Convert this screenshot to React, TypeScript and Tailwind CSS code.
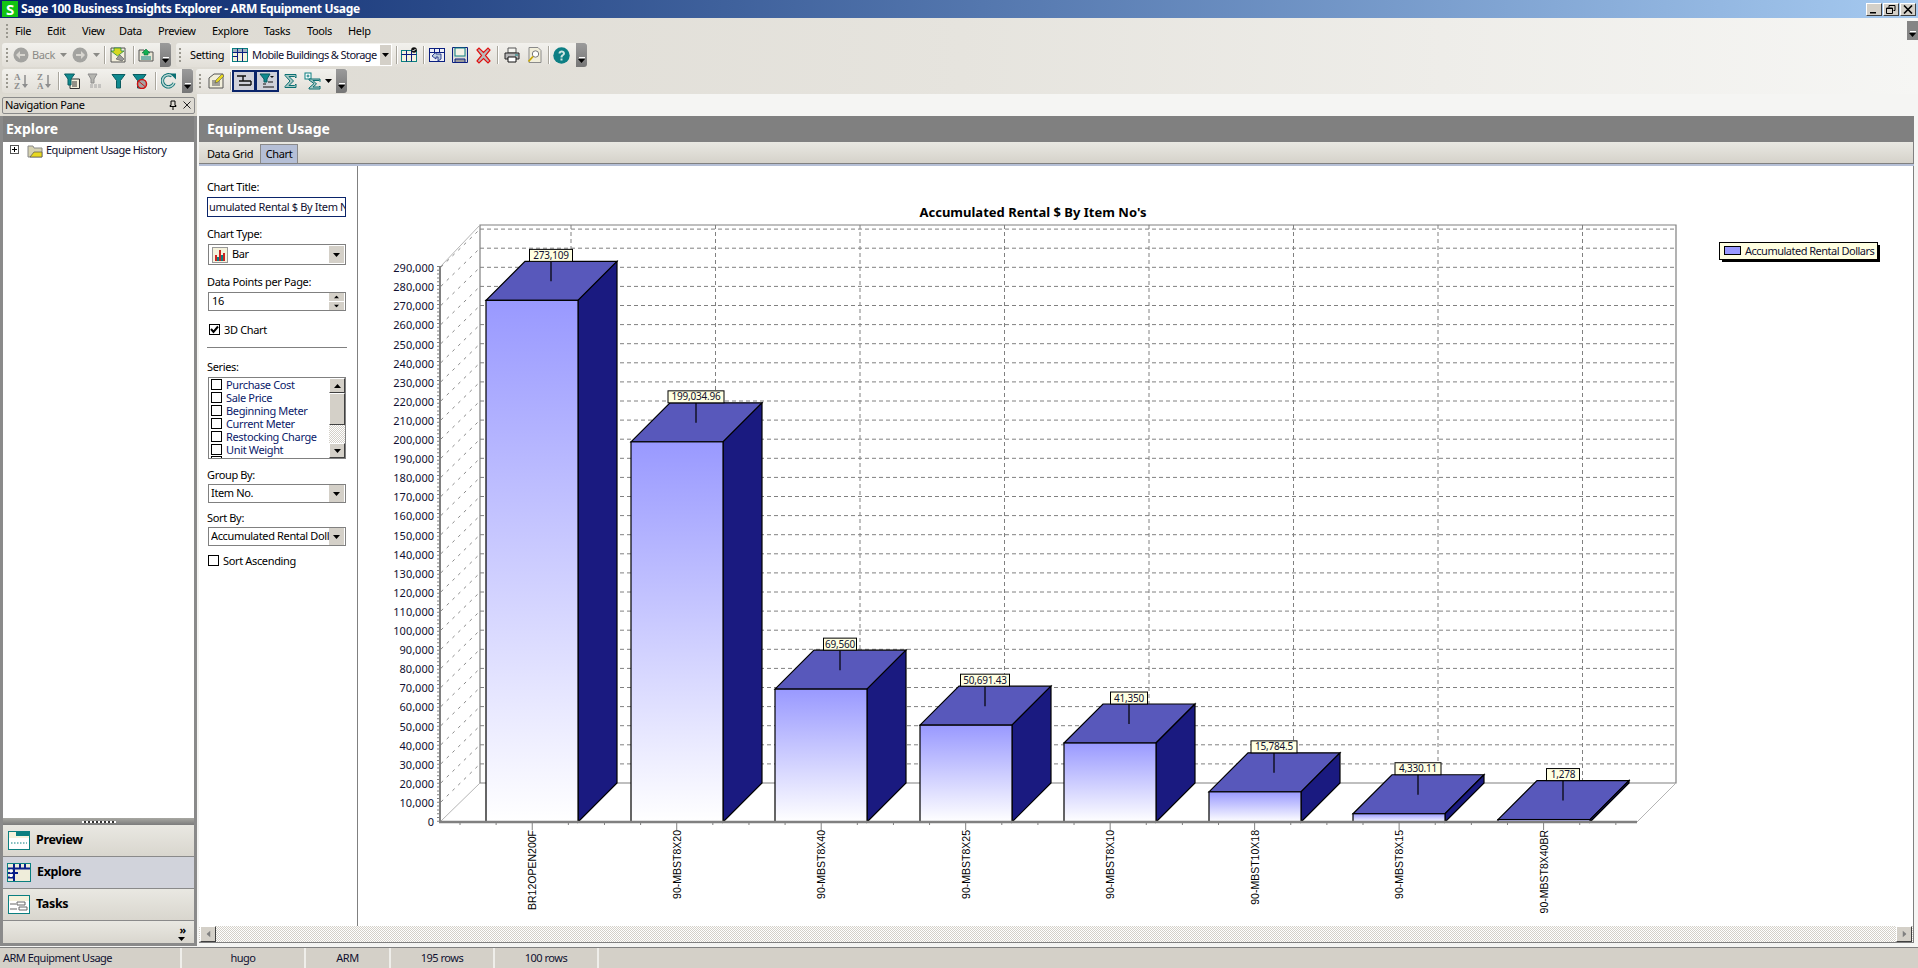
import type { ReactNode } from "react";

const series = ["Purchase Cost", "Sale Price", "Beginning Meter", "Current Meter", "Restocking Charge", "Unit Weight"];

const bars = [
  { name: "BR12OPEN200F", label: "273,109", value: 273109, x: 486, w: 43 },
  { name: "90-MBST8X20", label: "199,034.96", value: 199034.96, x: 631, w: 56 },
  { name: "90-MBST8X40", label: "69,560", value: 69560, x: 775, w: 33 },
  { name: "90-MBST8X25", label: "50,691.43", value: 50691.43, x: 920, w: 49 },
  { name: "90-MBST8X10", label: "41,350", value: 41350, x: 1064, w: 37 },
  { name: "90-MBST10X18", label: "15,784.5", value: 15784.5, x: 1209, w: 46 },
  { name: "90-MBST8X15", label: "4,330.11", value: 4330.11, x: 1353, w: 46 },
  { name: "90-MBST8X40BR", label: "1,278", value: 1278, x: 1498, w: 33 },
];

const menus = [
  ["File", "w-[32px]"],
  ["Edit", "w-[35px]"],
  ["View", "w-[37px]"],
  ["Data", "w-[39px]"],
  ["Preview", "w-[54px]"],
  ["Explore", "w-[52px]"],
  ["Tasks", "w-[43px]"],
  ["Tools", "w-[41px]"],
  ["Help", "w-[30px]"],
];

const Ico = ({ children, className = "" }: { children: ReactNode; className?: string }) => (
  <svg viewBox="0 0 16 16" className={`h-4 w-4 shrink-0 ${className}`}>
    {children}
  </svg>
);

const Grip = ({ className = "" }: { className?: string }) => (
  <div className={`h-[14px] w-0 border-l-2 border-dotted border-[#9a988f] ${className}`} />
);

const Sep = ({ className = "" }: { className?: string }) => (
  <div className={`h-[18px] w-[2px] shrink-0 border-l border-r border-l-[#a9a69d] border-r-white ${className}`} />
);

const Caret = ({ className = "", color = "#000" }: { className?: string; color?: string }) => (
  <svg viewBox="0 0 7 4" className={`h-[4px] w-[7px] shrink-0 ${className}`}>
    <path d="M0 0h7L3.5 4z" fill={color} />
  </svg>
);

const BandEnd = () => (
  <div className="ml-auto flex h-full w-[11px] shrink-0 flex-col items-center justify-end rounded-r-[3px] bg-gradient-to-b from-[#9b9b9b] to-[#767676] pb-[4px]">
    <div className="mb-[1px] h-px w-[6px] bg-white" />
    <Caret />
  </div>
);

const Band = ({ className, children }: { className: string; children: ReactNode }) => (
  <div className={`flex h-[24px] shrink-0 items-center rounded-l-[3px] bg-gradient-to-b from-[#f2f1ed] to-[#e2dfd8] pl-[3px] ${className}`}>
    {children}
    <BandEnd />
  </div>
);

const Funnel = ({ fill = "#0f8a8f", stroke = "#0b5c60" }: { fill?: string; stroke?: string }) => (
  <path d="M1 1.5h13L9.5 7.5v7.5h-4V7.5z" fill={fill} stroke={stroke} strokeWidth="1" />
);

const SortIcon = ({ a, b, className }: { a: string; b: string; className?: string }) => (
  <svg viewBox="0 0 16 18" className={`h-[18px] w-4 shrink-0 tracking-normal ${className ?? ""}`}>
    <text x="0" y="8" fontSize="9" fontWeight="700" fontFamily="Liberation Serif, serif" fill="#8d8d8d">{a}</text>
    <text x="0" y="17" fontSize="9" fontWeight="700" fontFamily="Liberation Serif, serif" fill="#8d8d8d">{b}</text>
    <path d="M11 3v10" stroke="#8d8d8d" strokeWidth="1.5" />
    <path d="M8 12h6l-3 4z" fill="#8d8d8d" />
  </svg>
);

const Sigma = ({ className = "" }: { className?: string }) => (
  <Ico className={className}>
    <path d="M2 1.5h11v3.5l-1.5-1.5H6l4.5 4.5L6 12.5h5.5l1.5-1.5v3.5H2v-1l5-5.5-5-5.5z" fill="#a9c9c4" stroke="#0b6f72" strokeWidth="1" />
  </Ico>
);

const TableIcon = ({ className = "" }: { className?: string }) => (
  <Ico className={className}>
    <rect x="0.5" y="1.5" width="15" height="13" fill="#f5f2dc" stroke="#0b7f80" />
    <path d="M0.5 5.5h15M5.5 1.5v13M10.5 1.5v13M0.5 9.5h5" stroke="#0b1f80" strokeWidth="1" />
    <rect x="1" y="2" width="14" height="3" fill="#0a3a8a" opacity="0.35" />
  </Ico>
);

const Field = ({ children, className = "" }: { children: ReactNode; className?: string }) => (
  <div className={`flex ml-[1px] w-[138px] items-center border border-[#808080] bg-white ${className}`}>{children}</div>
);

const DropBtn = () => (
  <div className="ml-auto mr-px flex h-[17px] w-[15px] shrink-0 items-center justify-center bg-[#d4d0c8]">
    <Caret />
  </div>
);

const Check = ({ checked = false, className = "" }: { checked?: boolean; className?: string }) => (
  <div className={`flex h-[11px] w-[11px] shrink-0 items-center justify-center border border-black bg-white ${className}`}>
    {checked && (
      <svg viewBox="0 0 9 9" className="h-[9px] w-[9px]">
        <path d="M1 4l2.5 3L8 1.5" fill="none" stroke="#000" strokeWidth="2" />
      </svg>
    )}
  </div>
);

const ScrollBtn = ({ dir }: { dir: "up" | "down" }) => (
  <div className="flex h-[15px] w-[16px] items-center justify-center border border-b-[#404040] border-l-white border-r-[#404040] border-t-white bg-[#d4d0c8]">
    <Caret className={dir === "up" ? "rotate-180" : ""} />
  </div>
);

const Hatch = "bg-[repeating-conic-gradient(#d4d0c8_0_25%,#ffffff_0_50%)] bg-[length:2px_2px]";

const NavButton = ({ label, icon, active }: { label: string; icon: ReactNode; active?: boolean }) => (
  <div className={`flex h-[32px] shrink-0 items-center border-b border-[#8a8a8a] pl-[5px] ${active ? "bg-[#d1d3db]" : "bg-gradient-to-b from-[#e9e8e2] to-[#d9d6ce]"}`}>
    {icon}
    <span className="ml-[6px] text-[12.5px] font-bold text-black">{label}</span>
  </div>
);

const Chart = () => {
  const levels = Array.from({ length: 30 }, (_, i) => i);
  const axisY = (k: number) => 822 - k * 19.1;
  const vLines = [571, 715.5, 860, 1004.5, 1149, 1293.5, 1438, 1582.5];
  const ticks = Array.from({ length: 33 }, (_, i) => 460 + i * 36.12);
  return (
    <svg viewBox="358 166 1555 760" className="h-[760px] w-[1555px] shrink-0 tracking-normal" style={{ fontFamily: "'Noto Sans', sans-serif" }}>
      <defs>
        <linearGradient id="barFill" x1="0" y1="0" x2="0" y2="1">
          <stop offset="0" stopColor="#9999ff" />
          <stop offset="1" stopColor="#ffffff" />
        </linearGradient>
      </defs>
      <text x="1033" y="217" textAnchor="middle" fontSize="13" fontWeight="700" fill="#000">
        Accumulated Rental $ By Item No's
      </text>
      {/* back wall */}
      {levels.slice(1).map((k) => (
        <line key={k} x1="480" x2="1676" y1={axisY(k) - 39} y2={axisY(k) - 39} stroke="#808080" strokeDasharray="4 3" />
      ))}
      {vLines.map((x) => (
        <line key={x} x1={x} x2={x} y1="225" y2="783" stroke="#808080" strokeDasharray="4 3" />
      ))}
      <path d="M480 783V225H1676V783H480" fill="none" stroke="#808080" strokeWidth="1.2" />
      {/* side wall and floor */}
      {levels.slice(1).map((k) => (
        <line key={k} x1="441" x2="480" y1={axisY(k) - 1} y2={axisY(k) - 39} stroke="#8a8a8a" strokeDasharray="3 5" />
      ))}
      <path d="M441 266L480 225M441 821L480 783M1637 822L1676 783" fill="none" stroke="#b5b5b5" />
      {/* bars */}
      {bars.map((b) => {
        const top = 822 - b.value * 0.00191;
        const labelX = b.x + 65;
        const back = top - 39;
        return (
          <g key={b.name}>
            <path d={`M${b.x} ${top}L${b.x + 39} ${back}H${b.x + 131}L${b.x + 92} ${top}z`} fill="#5858bb" stroke="#000" strokeWidth="1.2" />
            <path d={`M${b.x + 92} ${top}L${b.x + 131} ${back}V783L${b.x + 92} 822z`} fill="#1a1a80" stroke="#000" strokeWidth="1.2" />
            <rect x={b.x} y={top} width="92" height={822 - top} fill="url(#barFill)" stroke="#000" strokeWidth="1.2" />
            <line x1={labelX} x2={labelX} y1={back} y2={back + 20} stroke="#000" strokeWidth="1.2" />
            <rect x={labelX - b.w / 2} y={back - 12} width={b.w} height="12" fill="#ffffe1" stroke="#000" />
            <text x={labelX} y={back - 2.5} textAnchor="middle" fontSize="10" letterSpacing="-0.2" fill="#101030">{b.label}</text>
          </g>
        );
      })}
      {/* axes */}
      <line x1="440" x2="440" y1="266" y2="823" stroke="#808080" strokeWidth="2" />
      <line x1="438" x2="438" y1="266" y2="822" stroke="#808080" strokeWidth="2" strokeDasharray="1 2.8" />
      <line x1="439" x2="1637" y1="822" y2="822" stroke="#808080" strokeWidth="2.4" />
      {ticks.map((x, i) => (
        <line key={x} x1={x} x2={x} y1="822" y2={(i - 2) % 4 === 0 ? 830 : 825} stroke="#808080" />
      ))}
      {levels.map((k) => (
        <text key={k} x="434" y={axisY(k) + 4} textAnchor="end" fontSize="11" fill="#101030">
          {k === 0 ? "0" : `${k * 10},000`}
        </text>
      ))}
      {bars.map((b) => (
        <text
          key={b.name}
          transform={`translate(${b.x + 50} 830) rotate(-90)`}
          textAnchor="end"
          fontSize="10.5"
          fill="#000"
          style={{ fontFamily: "'Liberation Sans', sans-serif" }}
        >
          {b.name}
        </text>
      ))}
      {/* legend */}
      <rect x="1722" y="245" width="158" height="17" fill="#000" />
      <rect x="1719.5" y="242.5" width="158" height="17" fill="#ffffe1" stroke="#000" />
      <rect x="1724.5" y="246.5" width="16" height="8" fill="#9999ff" stroke="#000" />
      <text x="1745" y="255" fontSize="11" letterSpacing="-0.5" fill="#101030">Accumulated Rental Dollars</text>
    </svg>
  );
};

export default function App() {
  return (
    <div className="flex h-[968px] w-[1918px] flex-col overflow-hidden bg-[#f5f5f3] font-['Noto_Sans',sans-serif] text-[11px] tracking-[-0.35px] text-black">
      {/* title bar */}
      <div className="flex h-[18px] shrink-0 items-center bg-gradient-to-r from-[#0a246a] to-[#a6caf0] pl-[2px]">
        <div className="flex h-4 w-4 items-center justify-center bg-[#12c412] text-[15px] font-bold leading-none text-white">S</div>
        <span className="ml-[3px] text-[12px] font-bold text-white">Sage 100 Business Insights Explorer - ARM Equipment Usage</span>
        <div className="ml-auto mr-[2px] flex items-center gap-[1px]">
          {["min", "restore", "close"].map((b) => (
            <div key={b} className="flex h-[13px] w-[16px] items-center justify-center border border-b-[#404040] border-l-white border-r-[#404040] border-t-white bg-[#d4d0c8]">
              <svg viewBox="0 0 10 9" className="h-[9px] w-[10px]">
                {b === "min" && <path d="M1 7h6v1.5H1z" fill="#000" />}
                {b === "restore" && <path d="M3 .5h6v5H7.500M3 .5v2M.5 3h6v5.500h-6zM.5 3.500h6" fill="none" stroke="#000" />}
                {b === "close" && <path d="M1 .5l8 8M9 .5l-8 8" stroke="#000" strokeWidth="1.6" />}
              </svg>
            </div>
          ))}
        </div>
      </div>

      {/* menus and toolbars */}
      <div className="flex h-[76px] shrink-0 flex-col bg-gradient-to-r from-[#dcd9d1] via-[#e6e4de] to-[#f6f6f4]">
        <div className="flex h-[25px] shrink-0 items-center pl-[6px]">
          <Grip className="mr-[7px]" />
          {menus.map(([m, c]) => (
            <span key={m} className={`${c} shrink-0 whitespace-nowrap pt-[2px]`}>{m}</span>
          ))}
          <div className="ml-auto flex h-[19px] w-[11px] flex-col items-center justify-end bg-[#858585] pb-[3px]">
            <div className="mb-[1px] h-px w-[6px] bg-white" />
            <Caret />
          </div>
        </div>

        <div className="flex h-[26px] shrink-0 pl-[2px]">
          <Band className="w-[169px]">
            <Grip className="ml-[1px]" />
            <Ico className="ml-[5px]">
              <circle cx="8" cy="8" r="7.5" fill="#a3a3a0" />
              <path d="M12 7H7V4L3 8l4 4V9h5z" fill="#d8d6d0" />
            </Ico>
            <span className="ml-[3px] w-[22px] shrink-0 whitespace-nowrap text-[#8a8a86]">Back</span>
            <Caret color="#8a8a86" className="ml-[6px]" />
            <Ico className="ml-[5px]">
              <circle cx="8" cy="8" r="7.5" fill="#a3a3a0" />
              <path d="M4 7h5V4l4 4-4 4V9H4z" fill="#d8d6d0" />
            </Ico>
            <Caret color="#8a8a86" className="ml-[5px]" />
            <Sep className="ml-[4px]" />
            <Ico className="ml-[4px]">
              <path d="M1 1h14v14H1z" fill="#f3efdc" stroke="#555" />
              <path d="M4 1h7v3h3L7.500 9 1 4h3z" fill="#d6d820" stroke="#0b7f40" strokeWidth=".7" />
              <path d="M6 12l4-4 4 4-2 2z" fill="#999" stroke="#555" strokeWidth=".6" />
            </Ico>
            <Sep className="ml-[7px]" />
            <Ico className="ml-[3px]">
              <path d="M1 3h5l1 2h8v9H1z" fill="#eae7d4" stroke="#555" />
              <path d="M8 2l4 4h-2v2H6V6H4z" fill="#12b050" stroke="#0b6f40" strokeWidth=".6" />
              <path d="M3 10h10M3 12h10" stroke="#0b7f80" />
            </Ico>
          </Band>
          <Band className="ml-[5px] w-[411px]">
            <Grip />
            <span className="ml-[9px] w-[40px] shrink-0 whitespace-nowrap">Setting</span>
            <div className="flex h-[22px] w-[162px] shrink-0 items-center bg-white pl-[2px]">
              <TableIcon />
              <span className="ml-[4px] whitespace-nowrap tracking-[-0.6px] text-[#101030]">Mobile Buildings &amp; Storage</span>
              <div className="ml-auto mr-px flex h-[20px] w-[11px] shrink-0 items-center justify-center bg-[#d4d0c8]">
                <Caret />
              </div>
            </div>
            <Sep className="ml-[4px]" />
            <Ico className="ml-[3px]">
              <rect x="0.500" y="3.500" width="15" height="11" fill="#f5f2dc" stroke="#0b7f80" />
              <path d="M0.500 7.500h15M5.500 3.500v11M10.500 3.500v11" stroke="#0b1f80" />
              <circle cx="13" cy="3" r="2.800" fill="#111" />
              <path d="M11.500 3l1 1 2-2" stroke="#fff" fill="none" />
            </Ico>
            <Sep className="ml-[6px]" />
            <Ico className="ml-[4px]">
              <rect x="0.500" y="1.500" width="15" height="13" fill="#eef0f6" stroke="#0b1f80" />
              <path d="M0.500 5.500h15M5.500 1.500v4M10.500 1.500v4" stroke="#0b1f80" />
              <path d="M3 9l4-4v2h5v5l-3 2v-4H7v2z" fill="#bcd" stroke="#0b1f80" strokeWidth=".8" />
            </Ico>
            <Ico className="ml-[7px]">
              <path d="M.500.500h15v15H.500z" fill="#dcdcd8" stroke="#0b1f80" />
              <rect x="3" y="1" width="10" height="8" fill="#f3f1e6" stroke="#0b7f80" />
              <path d="M3 15v-3h10v3" fill="#9a9a9a" stroke="#0b1f80" />
            </Ico>
            <svg viewBox="0 0 17 17" className="ml-[7px] h-[17px] w-[17px] shrink-0">
              <path d="M2 3l2-2 4.500 4.500L13 1l2 2-4.500 5.500L15 14l-2 2-4.500-4.500L4 16l-2-2 4.500-5.500z" fill="#b9b9b9" stroke="#e01010" strokeWidth="1.200" />
            </svg>
            <Sep className="ml-[5px]" />
            <Ico className="ml-[5px]">
              <path d="M4 1h8v5H4z" fill="#f5f5f0" stroke="#555" />
              <path d="M1 6h14v6H1z" fill="#b8b8b8" stroke="#222" />
              <path d="M4 10h8v5H4z" fill="#fff" stroke="#111" />
              <path d="M11 8h3" stroke="#0b7f80" />
            </Ico>
            <Ico className="ml-[7px]">
              <path d="M2 .500h9l3 3v12H2z" fill="#f1eeda" stroke="#8a8a8a" />
              <circle cx="8.500" cy="7" r="3.200" fill="#fff" stroke="#777" />
              <path d="M6 9.500L1.500 14.500" stroke="#c9a800" strokeWidth="1.800" />
            </Ico>
            <Sep className="ml-[5px]" />
            <svg viewBox="0 0 17 17" className="ml-[3px] h-[17px] w-[17px] shrink-0">
              <circle cx="8.500" cy="8.500" r="8.200" fill="#0d7f84" />
              <path d="M5.500 6.500c0-4 6.500-4 6.500 0 0 2-2.500 2-2.500 4h-2c0-3 2.500-3 2.500-4 0-1.500-2.500-1.500-2.500 0z" fill="#cfe5e2" />
              <rect x="7.500" y="11.500" width="2" height="2" fill="#cfe5e2" />
            </svg>
          </Band>
        </div>

        <div className="flex h-[25px] shrink-0 pl-[2px]">
          <Band className="w-[191px]">
            <Grip className="ml-[1px]" />
            <SortIcon a="A" b="Z" className="ml-[6px]" />
            <SortIcon a="Z" b="A" className="ml-[7px]" />
            <Sep className="ml-[5px]" />
            <Ico className="ml-[4px]">
              <path d="M6 6h9.500v9.500H6z" fill="#f3efdc" stroke="#333" />
              <path d="M8 9h5M8 11h5M8 13h5" stroke="#333" />
              <path d="M.500 1h10L7 6v6H4V6z" fill="#0f8a8f" stroke="#0b5c60" />
            </Ico>
            <Ico className="ml-[7px]">
              <path d="M1 1h9L7 6v4H4V6z" fill="#b5b5b0" stroke="#8d8d8d" />
              <path d="M3 12h12M3 14h12" stroke="#a0a0a0" strokeDasharray="3 1" />
            </Ico>
            <Ico className="ml-[8px]"><Funnel /></Ico>
            <Ico className="ml-[5px]">
              <Funnel />
              <circle cx="10" cy="11" r="4.500" fill="#a5a5a5" stroke="#d01010" strokeWidth="1.500" />
              <path d="M7 8.500l6 5" stroke="#d01010" />
            </Ico>
            <Sep className="ml-[7px]" />
            <Ico className="ml-[4px]">
              <path d="M13 10a6 6 0 1 1-2-7" fill="none" stroke="#0b6f72" strokeWidth="3.400" />
              <path d="M13 10a6 6 0 1 1-2-7" fill="none" stroke="#b8d6d2" strokeWidth="1.600" />
              <path d="M9 .500h6v6z" fill="#0b6f72" />
            </Ico>
          </Band>
          <Band className="ml-[3px] w-[151px]">
            <Grip />
            <Ico className="ml-[7px]">
              <path d="M1 5l5-4h9v14H1z" fill="#f1eeda" stroke="#555" />
              <path d="M4 8h8M4 10h8M4 12h8" stroke="#555" />
              <path d="M8 7l6-6 2 2-6 6-3 1z" fill="#e8d820" stroke="#555" strokeWidth=".6" />
            </Ico>
            <Sep className="ml-[6px]" />
            <div className="flex h-[22px] w-[24px] shrink-0 items-center justify-center border-2 border-[#0a246a] bg-[#d0d1da]">
              <Ico>
                <path d="M1 3h9M7 3v5M3 8h12M3 12h12M15 8v4" stroke="#111" strokeWidth="1.400" fill="none" />
              </Ico>
            </div>
            <div className="ml-[-1px] flex h-[22px] w-[24px] shrink-0 items-center justify-center border-2 border-[#0a246a] bg-[#d0d1da]">
              <Ico>
                <path d="M1 1h10L8 6v3H5V6z" fill="#0f8a8f" stroke="#0b5c60" />
                <path d="M11 3h4l-2 2z" fill="#111" />
                <path d="M4 11h3M4 14h11M9 9h5" stroke="#111" strokeWidth="1.200" />
              </Ico>
            </div>
            <Sigma className="ml-[4px]" />
            <svg viewBox="0 0 18 18" className="ml-[5px] h-[18px] w-[18px] shrink-0">
              <rect x="1" y="1" width="6" height="6" fill="#fff" stroke="#0b7f80" />
              <path d="M2.500 4h3M4 2.500v3" stroke="#0b7f80" />
              <path d="M5 7h11v2.500l-1-1H9l3.500 3.500L9 15h6l1-1v3H5v-1l5-4.500L5 8z" fill="#a9c9c4" stroke="#0b6f72" />
            </svg>
            <Caret className="ml-[3px]" />
          </Band>
        </div>
      </div>

      <div className="flex min-h-0 flex-1">
        {/* navigation pane */}
        <div className="flex w-[199px] shrink-0 flex-col">
          <div className="flex h-[22px] w-[197px] shrink-0 items-center bg-[#dedbd2] pl-[2px] pr-[2px]">
            <div className="flex h-[17px] w-full items-center rounded-[2px] border border-[#8a8a8a] bg-[#dedbd3] pl-[2px] pr-[3px]">
              <span>Navigation Pane</span>
              <svg viewBox="0 0 8 10" className="ml-auto h-[10px] w-2">
                <path d="M2 1h4v4.500h1v1H1v-1h1zM4 6.500V10" fill="none" stroke="#000" />
              </svg>
              <svg viewBox="0 0 8 8" className="ml-[6px] h-2 w-2">
                <path d="M.5.5l7 7M7.500.5l-7 7" stroke="#222" />
              </svg>
            </div>
          </div>
          <div className="flex h-[830px] w-[197px] shrink-0 flex-col border-b-[3px] border-l-[3px] border-r-[3px] border-[#8a8a8a]">
            <div className="flex h-[26px] shrink-0 items-center bg-[#808080] pb-[2px] pl-[3px] text-[14px] font-bold tracking-normal text-white">Explore</div>
            <div className="flex min-h-0 flex-1 items-start bg-white pl-[7px] pt-[1px]">
              <div className="mt-[2px] flex h-[9px] w-[9px] items-center justify-center border border-[#555] bg-white">
                <svg viewBox="0 0 7 7" className="h-[7px] w-[7px]">
                  <path d="M1 3.500h5M3.500 1v5" stroke="#000" />
                </svg>
              </div>
              <Ico className="ml-[8px]">
                <path d="M1 3h5l1 2h8v9H1z" fill="#d6d2b0" stroke="#888" />
                <path d="M3 14l4-5h8v5z" fill="#e8d820" stroke="#555" strokeWidth=".7" />
              </Ico>
              <span className="ml-[3px] leading-[14px] tracking-[-0.5px] text-[#101030]">Equipment Usage History</span>
            </div>
            <div className="flex h-[7px] shrink-0 items-center justify-center bg-gradient-to-b from-[#a8a8a2] to-[#7c7c7c]">
              <div className="h-[2px] w-[34px] bg-[repeating-linear-gradient(90deg,#fff_0_2px,#333_2px_4px)]" />
            </div>
            <NavButton
              label="Preview"
              icon={
                <svg viewBox="0 0 22 19" className="h-[19px] w-[22px] shrink-0">
                  <rect x=".5" y=".5" width="21" height="18" fill="#f5f2dc" stroke="#0b7f80" />
                  <path d="M8 1h13v4H8z" fill="#0b7f80" />
                  <rect x="1" y="7" width="20" height="11" fill="#fff" />
                  <path d="M3 12h16" stroke="#0b7f80" strokeDasharray="1.500 1.500" />
                </svg>
              }
            />
            <NavButton
              active
              label="Explore"
              icon={
                <svg viewBox="0 0 24 19" className="-ml-[1px] h-[19px] w-[24px] shrink-0">
                  <rect x=".5" y=".5" width="23" height="18" fill="#efedda" stroke="#0b7f80" />
                  <path d="M1 5.500h22M1 10h10M1 14.500h6M7 1v17M13 1v5M18 1v5" stroke="#0a1f8a" strokeWidth="2" />
                  <path d="M3 6.500h2v3H3zM3 11h2v3H3z" fill="#fff" />
                </svg>
              }
            />
            <NavButton
              label="Tasks"
              icon={
                <svg viewBox="0 0 22 19" className="h-[19px] w-[22px] shrink-0">
                  <rect x=".5" y=".5" width="21" height="18" fill="#f5f2dc" stroke="#0b7f80" />
                  <rect x="1" y="6" width="20" height="12" fill="#fff" />
                  <path d="M2 9h6M9 7h8v3H9zM2 14h7M11 12h8v3h-8z" fill="none" stroke="#666" />
                </svg>
              }
            />
            <div className="flex h-[22px] shrink-0 flex-col items-end bg-gradient-to-b from-[#e9e8e2] to-[#d9d6ce] pr-[8px] pt-[4px]">
              <span className="text-[11px] font-bold leading-[10px]">»</span>
              <Caret className="mr-[1px] mt-[2px]" />
            </div>
          </div>
        </div>

        {/* main */}
        <div className="flex min-w-0 flex-1 flex-col pr-[4px]">
          <div className="mt-[22px] flex h-[26px] shrink-0 items-center bg-[#808080] pb-[2px] pl-[8px] text-[14px] font-bold tracking-normal text-white">Equipment Usage</div>
          <div className="flex h-[21px] shrink-0 items-end border-r border-[#808080] bg-gradient-to-b from-[#e9e8e2] to-[#d5d2ca] pl-px">
            <div className="flex h-[19px] w-[60px] items-center justify-center pt-[1px]">Data Grid</div>
            <div className="flex h-[19px] w-[38px] items-center justify-center border border-b-0 border-[#8a8a8a] bg-[#b5bfd6] pt-[1px]">Chart</div>
          </div>
          <div className="h-[3px] shrink-0 border-t border-[#808080] bg-[#b5bfd6]" />
          <div className="flex h-[760px] shrink-0 border-r border-[#808080] bg-white">
            <div className="flex w-[159px] shrink-0 flex-col border-r border-[#808080] pl-[8px]">
              <div className="mt-[14px] leading-[13px]">Chart Title:</div>
              <div className="mt-[4px] flex h-[20px] w-[139px] items-center overflow-hidden border border-[#0a246a] bg-white pl-[1px]">
                <span className="whitespace-nowrap text-[#101030]">umulated Rental $ By Item No</span>
              </div>
              <div className="mt-[10px] leading-[13px]">Chart Type:</div>
              <Field className="mt-[4px] h-[21px]">
                <svg viewBox="0 0 16 16" className="ml-[3px] h-4 w-4 shrink-0">
                  <rect x=".5" y=".5" width="15" height="15" fill="#f5f2dc" stroke="#999" />
                  <path d="M3 14V8h2v6zM7 14V3h2v11zM11 14V6h2v8z" fill="#c22" />
                  <path d="M5 14V10h2v4zM9 14V8h2v6z" fill="#0b7f80" />
                </svg>
                <span className="ml-[4px]">Bar</span>
                <DropBtn />
              </Field>
              <div className="mt-[10px] leading-[13px]">Data Points per Page:</div>
              <Field className="mt-[4px] h-[19px]">
                <span className="ml-[3px]">16</span>
                <div className="ml-auto mr-px flex w-[15px] flex-col gap-[1px]">
                  <div className="flex h-[8px] items-center justify-center bg-[#d4d0c8]"><Caret className="rotate-180 scale-75" /></div>
                  <div className="flex h-[8px] items-center justify-center bg-[#d4d0c8]"><Caret className="scale-75" /></div>
                </div>
              </Field>
              <div className="ml-[2px] mt-[12px] flex h-[13px] items-center">
                <Check checked />
                <span className="ml-[4px] leading-[13px]">3D Chart</span>
              </div>
              <div className="mt-[11px] h-px w-[140px] bg-[#808080]" />
              <div className="mt-[12px] leading-[13px]">Series:</div>
              <div className="ml-[1px] mt-[4px] flex h-[82px] w-[138px] border border-[#808080] bg-white">
                <div className="flex flex-1 flex-col overflow-hidden pl-[2px]">
                  {series.map((s) => (
                    <div key={s} className="flex h-[13px] shrink-0 items-center text-[#0a1a6a]">
                      <Check />
                      <span className="ml-[4px] whitespace-nowrap leading-[13px]">{s}</span>
                    </div>
                  ))}
                  <Check />
                </div>
                <div className="flex w-[16px] shrink-0 flex-col">
                  <ScrollBtn dir="up" />
                  <div className="h-[32px] border border-b-[#404040] border-l-white border-r-[#404040] border-t-white bg-[#d4d0c8]" />
                  <div className={`min-h-0 flex-1 ${Hatch}`} />
                  <ScrollBtn dir="down" />
                </div>
              </div>
              <div className="mt-[9px] leading-[13px]">Group By:</div>
              <Field className="mt-[3px] h-[19px]">
                <span className="ml-[2px]">Item No.</span>
                <DropBtn />
              </Field>
              <div className="mt-[8px] leading-[13px]">Sort By:</div>
              <Field className="mt-[3px] h-[19px]">
                <span className="ml-[2px] w-[118px] overflow-hidden whitespace-nowrap">Accumulated Rental Dollars</span>
                <DropBtn />
              </Field>
              <div className="ml-[1px] mt-[8px] flex h-[13px] items-center">
                <Check />
                <span className="ml-[4px] leading-[13px]">Sort Ascending</span>
              </div>
            </div>
            <Chart />
          </div>
          <div className={`flex h-[17px] shrink-0 items-center justify-between border-b border-r border-[#808080] pl-px pr-px ${Hatch}`}>
            <div className="flex h-[16px] w-[16px] items-center justify-center border border-b-[#404040] border-l-white border-r-[#404040] border-t-white bg-[#d4d0c8]">
              <Caret color="#808080" className="rotate-90" />
            </div>
            <div className="flex h-[16px] w-[16px] items-center justify-center border border-b-[#404040] border-l-white border-r-[#404040] border-t-white bg-[#d4d0c8]">
              <Caret color="#808080" className="-rotate-90" />
            </div>
          </div>
        </div>
      </div>

      {/* status bar */}
      <div className="flex h-[21px] shrink-0 items-stretch border-t border-[#808080] bg-[#d4d0c8] tracking-[-0.5px] text-[#101030]">
        <div className="flex w-[182px] items-center border-r-2 border-[#efeeea] pl-[3px]">ARM Equipment Usage</div>
        <div className="flex w-[124px] items-center justify-center border-r-2 border-[#efeeea]">hugo</div>
        <div className="flex w-[85px] items-center justify-center border-r-2 border-[#efeeea]">ARM</div>
        <div className="flex w-[104px] items-center justify-center border-r-2 border-[#efeeea]">195 rows</div>
        <div className="flex w-[104px] items-center justify-center border-r-2 border-[#efeeea]">100 rows</div>
      </div>
    </div>
  );
}
